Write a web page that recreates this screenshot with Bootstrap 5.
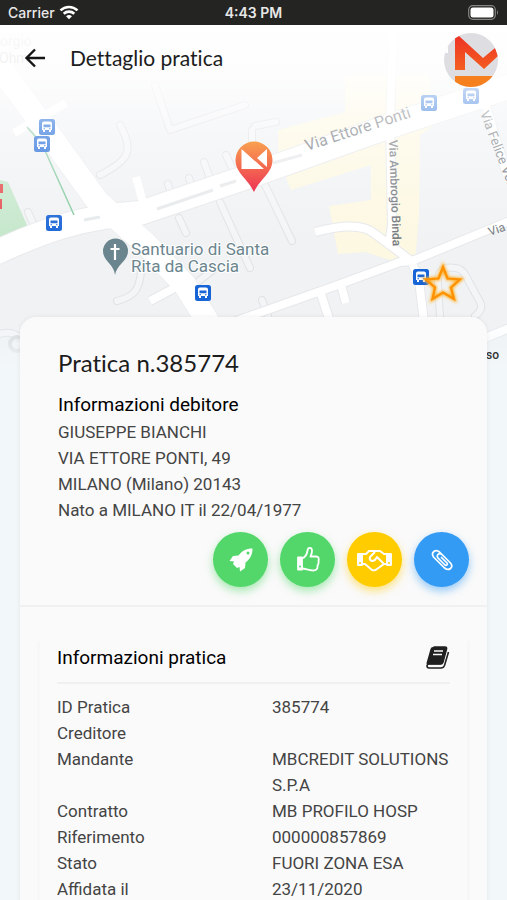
<!DOCTYPE html>
<html lang="it">
<head>
<meta charset="utf-8">
<meta name="viewport" content="width=device-width, initial-scale=1">
<title>Dettaglio pratica</title>
<link href="https://cdn.jsdelivr.net/npm/bootstrap@5.3.0/dist/css/bootstrap.min.css" rel="stylesheet">
<style>
body { font-family: Roboto, sans-serif; background: #f2f7fa; color: #444; font-size: 17px; line-height: 26px; overflow-x: hidden; }
.status { background: #242422; color: #e8e8e8; font: 500 14px/25px Inter, sans-serif; }
.status .clock { font-weight: 600; }
.side { flex: 1 1 0; }
.map-area { height: 292px; }
.map-svg { left: 0; top: 0; width: 100%; height: 345px; }
.display-face { font-family: Lato, sans-serif; color: #1c1c1c; font-variant-ligatures: none; }
.page-title { font-size: 21px; line-height: 28px; }
.app-header { padding: 8px 9px 0 24px; }
.sheet { margin: 0 20px; background: #fafafa; border-radius: 16px 16px 0 0; box-shadow: 0 0 5px rgba(0,0,0,.07); }
.debtor { padding: 30px 18px 18px 38px; border-bottom: 2px solid #f1f1f1; }
.case-title { font-size: 24px; line-height: 32px; margin-bottom: 14px; }
.section-title { font-size: 19px; line-height: 24px; color: #000; font-weight: 400; }
.debtor-lines { margin-top: 2px; }
.actions { gap: 12px; margin-top: 9px; }
.round-btn { width: 55px; height: 55px; color: #fff; }
.round-btn:hover { color: #fff; }
.go { background: #53d76a; box-shadow: 0 4px 9px rgba(83,215,106,.5); }
.deal { background: #fc0; box-shadow: 0 4px 9px rgba(255,204,0,.5); }
.attach { background: #349bf5; box-shadow: 0 4px 9px rgba(52,155,245,.5); }
.details { margin: 34px 17px 0; padding: 5px 17px 24px; border: solid #f7f7f7; border-width: 0 3px; }
.details-head { padding-bottom: 12px; border-bottom: 2px solid #f0f0f0; margin-bottom: 10px; }
.facts th { font-weight: 400; width: 215px; vertical-align: top; padding: 0; }
.facts td { padding: 0; vertical-align: top; }
</style>
<script src="https://cdn.jsdelivr.net/npm/bootstrap@5.3.0/dist/js/bootstrap.bundle.min.js"></script>
</head>
<body>
<div class="status d-flex align-items-center px-2">
  <div class="side d-flex align-items-center gap-1">
    <span>Carrier</span>
    <svg width="20" height="15" viewBox="0 0 20 15" fill="none" stroke="#fff" stroke-width="2.6" aria-hidden="true"><path d="M1.5 5.4C6.300 .8 13.700 .8 18.500 5.400M4.700 8.700C7.700 5.900 12.300 5.900 15.300 8.700"/><path d="M7 11.300Q10 8.700 13 11.300L10 14.300Z" fill="#fff" stroke="none"/></svg>
  </div>
  <span class="clock">4:43 PM</span>
  <div class="side d-flex justify-content-end">
    <svg width="31" height="15" viewBox="0 0 31 15" aria-hidden="true"><rect x=".7" y=".7" width="26.600" height="13.600" rx="4" fill="none" stroke="#858583" stroke-width="1.200"/><rect x="2.500" y="2.500" width="23" height="10" rx="2.500" fill="#fff"/><path d="M29 5q2 2.500 0 5z" fill="#858583"/></svg>
  </div>
</div>

<div class="map-area position-relative">
  <svg class="map-svg position-absolute" viewBox="0 25 507 345" preserveAspectRatio="xMidYMid slice" font-family="Roboto, sans-serif">
    <defs>
      <linearGradient id="haze" x1="0" y1="0" x2="0" y2="1"><stop offset="0" stop-color="#fff" stop-opacity=".98"/><stop offset=".14" stop-color="#fff" stop-opacity=".86"/><stop offset=".3" stop-color="#fff" stop-opacity=".45"/><stop offset=".48" stop-color="#fff" stop-opacity=".18"/><stop offset=".64" stop-color="#fff" stop-opacity="0"/></linearGradient>
      <linearGradient id="foot" x1="0" y1="0" x2="0" y2="1"><stop offset="0" stop-color="#f2f7fa" stop-opacity="0"/><stop offset="1" stop-color="#f2f7fa"/></linearGradient>
      <linearGradient id="pin" x1="0" y1="0" x2="0" y2="1"><stop offset="0" stop-color="#f9a150"/><stop offset=".5" stop-color="#f36a50"/><stop offset="1" stop-color="#ee3355"/></linearGradient>
      <filter id="glow" x="-30%" y="-30%" width="160%" height="160%"><feGaussianBlur stdDeviation="1.500"/></filter>
      <g id="stop"><rect x="-8" y="-8" width="16" height="16" rx="2.500" fill="#1764d6"/><path d="M-5-3.500Q-5-5.500-3-5.500H3Q5-5.500 5-3.500V3H4V5H2V3H-2V5H-4V3H-5Z" fill="#fff"/><path d="M-3.500-2.500H3.500V.2H-3.500ZM-3.500 1.300h1.500v1h-1.500zM2 1.300h1.500v1H2z" fill="#1764d6"/></g>
      <g id="lanes" fill="none" stroke-linecap="round" stroke-linejoin="round">
        <path d="M120 125C134 150 130 160 100 175M168 184L172 198M189 178L193 190M204 162L212 184M226 155L232 168M179 218L186 233M220 202L250 268M265 185L292 241M141 272C139 290 135 296 117 301M213 270L195 284M28 212L35 228M262 300L268 316M252 130V150M255 126L276 122M440 316L438 285Q436 265 455 268Q463 268 468 280L480 302Q484 309 475 316M0 334Q12 330 20 338M155 85L170 130L245 105"/>
      </g>
    </defs>
    <rect y="25" width="507" height="345" fill="#f0f2f4"/>
    <path d="M345 75H430V95L470 100L420 135L419 215L415 262L390 260L365 252L338 254L329 206L371 200V165L291 190L278 158L278 130L345 112Z" fill="#fdf8e2"/>
    <path d="M0 180L8 182L30 232L0 246Z" fill="#c5e7cb"/>
    <use href="#lanes" stroke="#e0e2e5" stroke-width="8"/><use href="#lanes" stroke="#f4f5f7" stroke-width="6"/>
    <g fill="none" stroke-linejoin="round">
      <g stroke="#e6e8eb">
        <path d="M-5 253C45 230 80 217 140 213L250 176L390 126L512 86" stroke-width="26"/>
        <path d="M-5 60L46 130L98 202L145 243L185 285L210 325" stroke-width="24"/>
        <path d="M220 327L253 315L335 286L400 262L412 261L512 220M320 291L330 322M341 285L346 303M411 260L419 280L424 322M315 232Q360 220 375 234L410 260M393 30L390 125L392 225L389 245M481 90L507 175M480 340L512 327M150 301L180 285" stroke-width="10"/>
      </g>
      <g stroke="#fff">
        <path d="M-5 253C45 230 80 217 140 213L250 176L390 126L512 86" stroke-width="24"/>
        <path d="M-5 60L46 130L98 202L145 243L185 285L210 325" stroke-width="23"/>
        <path d="M220 327L253 315L335 286L400 262L412 261L512 220M320 291L330 322M341 285L346 303M411 260L419 280L424 322M315 232Q360 220 375 234L410 260M393 30L390 125L392 225L389 245M481 90L507 175M480 340L512 327M150 301L180 285M14 133L66 103M136 177L144 206" stroke-width="8"/>
      </g>
      <path d="M157 209L213 190M220 186L236 181M273 163L302 155M84 220L100 217" stroke="#e6e9eb" stroke-width="3"/>
      <path d="M27 127L42 144L74 215" stroke="#86cba0" stroke-width="1.500"/><circle cx="17" cy="344" r="7" stroke="#d8dadd" stroke-width="4"/>
    </g>
    <g fill="#72777d">
      <text font-size="16" transform="translate(307 151) rotate(-18)">Via Ettore Ponti</text>
      <text font-size="12" font-weight="500" transform="translate(389 140) rotate(88)">Via Ambrogio Binda</text>
      <text font-size="13" transform="translate(480 113) rotate(69)">Via Felice Venosta</text>
      <text font-size="12" transform="translate(490 236) rotate(-20)">Via</text>
    </g>
    <g font-size="14" fill="#888"><text x="0" y="46">orgio</text><text x="-1" y="63">Ohm</text></g>
    <path d="M0 184H3V193H0zM0 199H2V209H0z" fill="#e44b4e"/>
    <use href="#stop" x="47" y="127"/><use href="#stop" x="42" y="144"/><use href="#stop" x="429" y="103"/><use href="#stop" x="471" y="96"/><use href="#stop" x="54" y="223"/><use href="#stop" x="203" y="293"/><use href="#stop" x="421" y="277"/>
    <rect y="25" width="507" height="345" fill="url(#haze)"/>
    <rect y="325" width="507" height="45" fill="url(#foot)"/>
    <path d="M115 275C114 264 103 261 103 251A12.500 12.500 0 0 1 128 251C128 261 117 264 115 275Z" fill="#6b858e"/><path d="M115 244V260M110.500 249H119.500" stroke="#fff" stroke-width="2.200"/>
    <g font-size="17" fill="#6b858e" stroke="#fff" stroke-width="2" paint-order="stroke"><text x="131" y="255">Santuario di Santa</text><text x="131" y="272">Rita da Cascia</text></g>
    <path d="M254 192C248 179 235.500 173 235.500 160A18.500 18.500 0 0 1 272.500 160C272.500 173 260 179 254 192Z" fill="url(#pin)"/>
    <path d="M241.500 149L264 169H241.500ZM267 149V167L257 158Z" fill="#fff"/>
    <path d="M443 267L447.500 278.500L460 279.500L451 287.500L454 299L443 292.500L432.500 299L435 287.500L426 279.500L438.500 278.500Z" fill="none" stroke="#ffb32f" stroke-width="4" filter="url(#glow)"/><path d="M443 267L447.500 278.500L460 279.500L451 287.500L454 299L443 292.500L432.500 299L435 287.500L426 279.500L438.500 278.500Z" fill="none" stroke="#ff9100" stroke-width="2.200"/>
    <text x="486" y="359" font-size="12" font-weight="500" fill="#333">so</text>
  </svg>
  <header class="app-header position-relative d-flex align-items-center">
    <div class="d-flex align-items-center pb-1">
      <button type="button" class="btn p-0 border-0 d-flex" aria-label="Indietro"><svg width="22" height="20" viewBox="0 0 22 20" fill="none" stroke="#151515" stroke-width="2.400"><path d="M11 1.500L2.500 10L11 18.500M2.500 10H21"/></svg></button>
      <h1 class="page-title display-face mb-0 ms-4 fw-normal">Dettaglio pratica</h1>
    </div>
    <svg class="ms-auto" width="54" height="54" viewBox="0 0 54 54" role="img" aria-label="Logo">
      <defs><linearGradient id="brand" x1="0" y1="0" x2="0" y2="1"><stop stop-color="#ed3325"/><stop offset="1" stop-color="#f45e20"/></linearGradient><clipPath id="disc"><circle cx="27" cy="27" r="27"/></clipPath></defs>
      <g clip-path="url(#disc)"><path fill="#dddde2" d="M0 0H54V54H0z"/><path d="M0 20V0H8L4 12V20Z" fill="#fff"/><path d="M11 5L15 3L39 25L51 15L54 23L40 36L21 19V37H11Z" fill="url(#brand)"/><path d="M11 43H54V54H11Z" fill="#f6801d"/></g>
    </svg>
  </header>
</div>

<main class="sheet position-relative">
  <section class="debtor">
    <h2 class="case-title display-face fw-normal">Pratica n.385774</h2>
    <h3 class="section-title mb-0">Informazioni debitore</h3>
    <address class="debtor-lines mb-0">GIUSEPPE BIANCHI<br>VIA ETTORE PONTI, 49<br>MILANO (Milano) 20143<br>Nato a MILANO IT il 22/04/1977</address>
    <div class="actions d-flex justify-content-end">
      <button type="button" class="round-btn go btn rounded-circle border-0 p-0 d-flex align-items-center justify-content-center" aria-label="Avvia"><svg width="26" height="26" viewBox="0 0 26 26"><path fill="currentColor" d="M24.500 1.500C18 1.500 14 4 10.500 8.500L5 9L1.500 14L6 14.500L5 17L9 21L11.500 20L12 24.500L17 21L17.500 15.500C22 12 24.500 8 24.500 1.500Z"/><circle cx="20" cy="6" r="1.500" fill="#53d76a"/></svg></button>
      <button type="button" class="round-btn go btn rounded-circle border-0 p-0 d-flex align-items-center justify-content-center" aria-label="Approva"><svg width="26" height="26" viewBox="0 0 26 26" fill="none" stroke="currentColor" stroke-width="1.800" stroke-linejoin="round"><path d="M3 10.500H7V22.500H3Z" fill="currentColor"/><path d="M7 11.500C11 10 12 7 12.500 3.500C13 0 17 0 17 4C17 6.500 15.500 9.500 15.500 9.500H21C24 9.500 24 12 23.500 14C24 16 23.500 17 22.500 18.500C23 22 21 23.500 18 23.500C13 23.500 11 21.500 7 21.500"/><circle cx="5" cy="19.500" r="1" fill="#53d76a" stroke="none"/></svg></button>
      <button type="button" class="round-btn deal btn rounded-circle border-0 p-0 d-flex align-items-center justify-content-center" aria-label="Accordo"><svg width="35" height="24" viewBox="0 0 35 24" fill="none" stroke="currentColor" stroke-width="1.900" stroke-linejoin="round"><path d="M1 6H5V17H1ZM30 6H34V17H30Z" fill="currentColor"/><path d="M5 6H9L12 3H23L27 6H30M5 16H8L15 22Q18 23 20 21L27 16H30M18 4L13 9Q12 12 15 13Q18 13 20 9L27 16"/><circle cx="3" cy="15" r="1" fill="#fc0" stroke="none"/><circle cx="32" cy="15" r="1" fill="#fc0" stroke="none"/></svg></button>
      <button type="button" class="round-btn attach btn rounded-circle border-0 p-0 d-flex align-items-center justify-content-center" aria-label="Allega"><svg width="24" height="24" viewBox="0 0 24 24" fill="none" stroke="currentColor" stroke-width="1.700" stroke-linecap="round" stroke-linejoin="round"><path d="M16.500 11L9.500 4C5.500 .5 .5 4.500 3.500 9L14.500 20C19 23.500 24 19.500 20.500 15L12 6.500C9 4.500 6 7 8 10L15 17C16.500 18 18 16.500 17 15L11.500 9.500"/></svg></button>
    </div>
  </section>
  <section class="details">
    <div class="details-head d-flex align-items-center justify-content-between">
      <h3 class="section-title mb-0">Informazioni pratica</h3>
      <svg width="25" height="24" viewBox="0 0 25 24" aria-hidden="true"><path d="M8.500 1H20Q22 1 21.500 3L18 16Q17.500 18 15.500 18H4Q2.500 18 2 19.500Q2 22 4 22H16Q18.500 22 19.500 19.500L23.500 6" fill="none" stroke="#222" stroke-width="1.600"/><path d="M8 1H20Q22 1 21.500 3L18 16.500Q17.500 18.500 15.500 18.500H3Q1.500 19 1.500 17L5.500 3Q6 1 8 1Z" fill="#202020"/><path d="M9 5H18M8 8.500H17" stroke="#fafafa" stroke-width="1.400"/></svg>
    </div>
    <table class="facts w-100">
      <tbody>
        <tr><th scope="row">ID Pratica</th><td>385774</td></tr>
        <tr><th scope="row">Creditore</th><td></td></tr>
        <tr><th scope="row">Mandante</th><td>MBCREDIT SOLUTIONS S.P.A</td></tr>
        <tr><th scope="row">Contratto</th><td>MB PROFILO HOSP</td></tr>
        <tr><th scope="row">Riferimento</th><td>000000857869</td></tr>
        <tr><th scope="row">Stato</th><td>FUORI ZONA ESA</td></tr>
        <tr><th scope="row">Affidata il</th><td>23/11/2020</td></tr>
      </tbody>
    </table>
  </section>
</main>
</body>
</html>
